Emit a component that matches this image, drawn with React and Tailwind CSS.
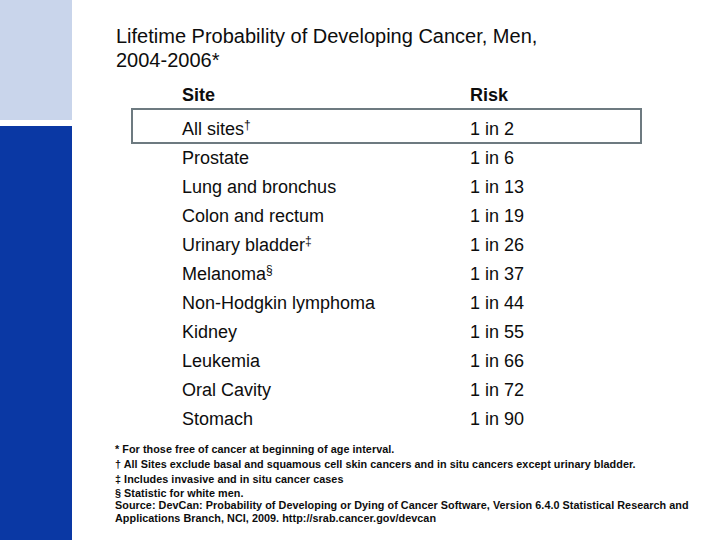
import React from "react";

const rows = [
  ["Prostate", null, "1 in 6"],
  ["Lung and bronchus", null, "1 in 13"],
  ["Colon and rectum", null, "1 in 19"],
  ["Urinary bladder", "‡", "1 in 26"],
  ["Melanoma", "§", "1 in 37"],
  ["Non-Hodgkin lymphoma", null, "1 in 44"],
  ["Kidney", null, "1 in 55"],
  ["Leukemia", null, "1 in 66"],
  ["Oral Cavity", null, "1 in 72"],
  ["Stomach", null, "1 in 90"],
];

export default function App() {
  return (
    <div
      className="w-[720px] h-[540px] flex bg-white text-[#0d0d0d] overflow-hidden"
      style={{ fontFamily: '"Liberation Sans", Arial, sans-serif' }}
    >
      <div className="w-[72px] flex flex-col shrink-0">
        <div className="h-[120px] bg-[#c9d5eb]" />
        <div className="h-[6px] bg-white" />
        <div className="flex-1 bg-[#0a38a4]" />
      </div>
      <div className="flex-1 pl-[44px] pt-[24px]">
        <div className="text-[20px] leading-[24px]">
          <div>Lifetime Probability of Developing Cancer, Men,</div>
          <div>2004-2006*</div>
        </div>
        <div className="ml-[15px] w-[511px] mt-[10px] text-[18px]">
          <div className="h-[26px] flex items-center pl-[51px] font-bold">
            <div className="w-[288px]">Site</div>
            <div>Risk</div>
          </div>
          <div className="h-[36px] border-2 border-[#6d7a80] flex items-center pt-[6px] pl-[49px]">
            <div className="w-[288px] leading-[26px]">
              All sites<sup className="text-[12px]">†</sup>
            </div>
            <div className="leading-[26px]">1 in 2</div>
          </div>
          {rows.map(([site, mark, risk]) => (
            <div key={site} className="h-[29px] flex items-center pl-[51px] leading-[29px]">
              <div className="w-[288px]">
                {site}
                {mark && <sup className="text-[12px]">{mark}</sup>}
              </div>
              <div>{risk}</div>
            </div>
          ))}
        </div>
        <div className="mt-[8px] ml-[-1px] text-[10.8px] font-bold tracking-[0.05px]">
          <div className="h-[15px] leading-[15px]">* For those free of cancer at beginning of age interval.</div>
          <div className="h-[15px] leading-[15px]">† All Sites exclude basal and squamous cell skin cancers and in situ cancers except urinary bladder.</div>
          <div className="h-[15px] leading-[15px]">‡ Includes invasive and in situ cancer cases</div>
          <div className="h-[12px] leading-[12px]">§ Statistic for white men.</div>
          <div className="h-[13px] leading-[13px]">Source: DevCan: Probability of Developing or Dying of Cancer Software, Version 6.4.0 Statistical Research and</div>
          <div className="h-[13px] leading-[13px]">Applications Branch, NCI, 2009. http://srab.cancer.gov/devcan</div>
        </div>
      </div>
    </div>
  );
}
